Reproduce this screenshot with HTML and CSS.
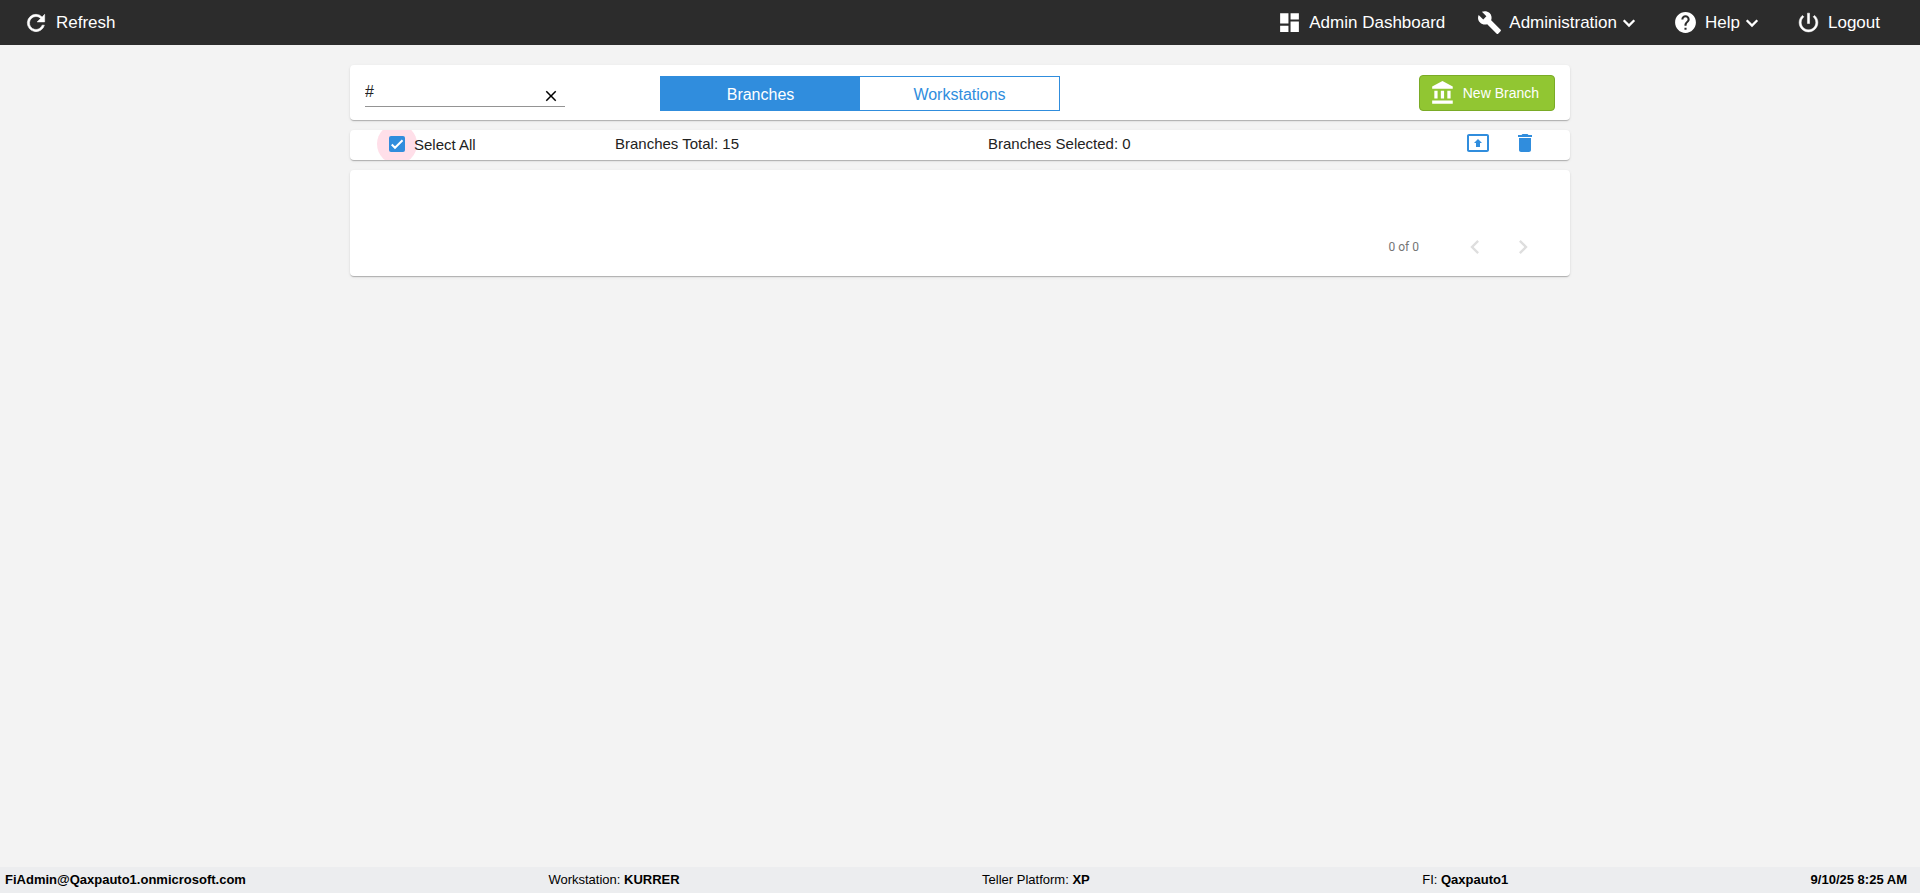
FILE: index.html
```html
<!DOCTYPE html>
<html lang="en">
<head>
<meta charset="utf-8">
<title>Branches</title>
<link rel="stylesheet" href="styles.css">
</head>
<body>
<header class="topbar">
  <button class="nav-item" type="button">
    <svg class="icon-refresh" viewBox="0 0 24 24"><path d="M17.65 6.35A7.96 7.96 0 0 0 12 4a8 8 0 1 0 7.73 10h-2.08A6 6 0 1 1 12 6c1.66 0 3.14.69 4.22 1.78L13 11h7V4l-2.35 2.35z"/></svg>
    Refresh
  </button>
  <nav class="nav">
    <a class="nav-item" href="#">
      <svg class="icon-nav" viewBox="0 0 24 24"><path d="M3 13h8V3H3v10zm0 8h8v-6H3v6zm10 0h8V11h-8v10zm0-18v6h8V3h-8z"/></svg>
      Admin Dashboard
    </a>
    <button class="nav-item" type="button">
      <svg class="icon-nav" viewBox="0 0 24 24"><path d="M22.7 19l-9.1-9.1c.9-2.3.4-5-1.5-6.900-2-2-5-2.400-7.400-1.300L9 6 6 9 1.600 4.700C.4 7.100.9 10.100 2.900 12.100c1.900 1.900 4.600 2.400 6.900 1.500l9.100 9.100c.4.4 1 .4 1.400 0l2.300-2.300c.5-.4.5-1.100.1-1.400z"/></svg>
      <span class="nav-label">Administration<svg class="icon-chevron" viewBox="0 0 24 24"><path d="M6.700 9.200l5.300 5.300 5.300-5.300"/></svg></span>
    </button>
    <button class="nav-item" type="button">
      <svg class="icon-nav" viewBox="0 0 24 24"><path d="M12 2C6.480 2 2 6.480 2 12s4.480 10 10 10 10-4.480 10-10S17.520 2 12 2zm1 17h-2v-2h2v2zm2.070-7.750l-.9.920C13.450 12.900 13 13.500 13 15h-2v-.5c0-1.100.45-2.100 1.170-2.830l1.240-1.260c.37-.36.59-.86.59-1.410 0-1.100-.9-2-2-2s-2 .9-2 2H8c0-2.210 1.790-4 4-4s4 1.790 4 4c0 .88-.36 1.680-.93 2.250z"/></svg>
      <span class="nav-label">Help<svg class="icon-chevron" viewBox="0 0 24 24"><path d="M6.700 9.200l5.300 5.300 5.300-5.300"/></svg></span>
    </button>
    <button class="nav-item" type="button">
      <svg class="icon-nav icon-bold" viewBox="0 0 24 24"><path d="M13 3h-2v10h2V3zm4.830 2.170l-1.420 1.420C17.990 7.860 19 9.810 19 12c0 3.870-3.130 7-7 7s-7-3.130-7-7c0-2.190 1.010-4.140 2.580-5.420L6.170 5.170C4.230 6.820 3 9.260 3 12c0 4.970 4.030 9 9 9s9-4.030 9-9c0-2.740-1.230-5.180-3.170-6.830z"/></svg>
      Logout
    </button>
  </nav>
</header>

<main class="content">
  <section class="card toolbar">
    <div class="search">
      <input class="search-input" type="text" value="#" aria-label="Search">
      <button class="search-clear" type="button" aria-label="Clear">
        <svg viewBox="0 0 24 24"><path d="M19 6.410L17.590 5 12 10.590 6.410 5 5 6.410 10.590 12 5 17.590 6.410 19 12 13.410 17.590 19 19 17.590 13.410 12z"/></svg>
      </button>
    </div>
    <div class="tabs">
      <button class="tab tab-active" type="button">Branches</button>
      <button class="tab" type="button">Workstations</button>
    </div>
    <button class="new-branch" type="button">
      <svg viewBox="0 0 24 24"><path d="M4 10v7h3v-7H4zm6 0v7h3v-7h-3zM2 22h19v-3H2v3zm14-12v7h3v-7h-3zm-4.500-9L2 6v2h19V6l-9.500-5z"/></svg>
      New Branch
    </button>
  </section>

  <section class="card summary">
    <div class="select-all">
      <span class="check-wrap"><input class="check" type="checkbox" id="select-all" checked><svg class="tick" viewBox="0 0 24 24"><path d="M4.100 12.700L9 17.600 20.300 6.300"/></svg></span>
      <label for="select-all">Select All</label>
    </div>
    <span>Branches Total: 15</span>
    <div class="summary-end">
      <span>Branches Selected: 0</span>
      <div class="actions">
        <button class="action" type="button" aria-label="Export"><svg viewBox="0 0 24 24"><path d="M21 3H3c-1.110 0-2 .89-2 2v14c0 1.110.89 2 2 2h18c1.110 0 2-.89 2-2V5c0-1.110-.89-2-2-2zm0 16.020H3V4.980h18v14.040zM10 12H8l4-4 4 4h-2v4h-4v-4z"/></svg></button>
        <button class="action" type="button" aria-label="Delete"><svg viewBox="0 0 24 24"><path d="M6 19c0 1.100.9 2 2 2h8c1.100 0 2-.9 2-2V7H6v12zM19 4h-3.500l-1-1h-5l-1 1H5v2h14V4z"/></svg></button>
      </div>
    </div>
  </section>

  <section class="card results">
    <div class="pager">
      <span class="pager-range">0 of 0</span>
      <button class="pager-button" type="button" disabled aria-label="Previous page"><svg viewBox="0 0 24 24"><path d="M15.410 7.410L14 6l-6 6 6 6 1.410-1.410L10.830 12z"/></svg></button>
      <button class="pager-button" type="button" disabled aria-label="Next page"><svg viewBox="0 0 24 24"><path d="M10 6L8.590 7.410 13.170 12l-4.580 4.590L10 18l6-6z"/></svg></button>
    </div>
  </section>
</main>

<footer class="statusbar">
  <b>FiAdmin@Qaxpauto1.onmicrosoft.com</b>
  <span>Workstation: <b>KURRER</b></span>
  <span class="platform">Teller Platform: <b>XP</b></span>
  <span>FI: <b>Qaxpauto1</b></span>
  <b>9/10/25 8:25 AM</b>
</footer>
</body>
</html>
```

FILE: styles.css
```css
* {
  box-sizing: border-box;
}

body {
  margin: 0;
  min-height: 100vh;
  display: flex;
  flex-direction: column;
  background: #f3f3f3;
  color: #222;
  font-family: "Liberation Sans", Arial, sans-serif;
  font-size: 15px;
}

button {
  margin: 0;
  padding: 0;
  border: 0;
  background: none;
  color: inherit;
  font: inherit;
  cursor: pointer;
}

svg {
  display: block;
  flex: none;
  fill: currentColor;
}

/* Top bar */
.topbar {
  display: flex;
  justify-content: space-between;
  align-items: center;
  height: 45px;
  padding: 0 40px 0 23px;
  background: #2c2c2c;
  color: #fff;
}

.nav {
  display: flex;
  gap: 32px;
}

.nav-item {
  display: flex;
  align-items: center;
  gap: 7px;
  color: #fff;
  font-size: 17px;
  text-decoration: none;
}

.nav-label {
  display: flex;
  align-items: center;
}

.icon-refresh {
  width: 26px;
  height: 26px;
  stroke: currentColor;
  stroke-width: .5;
}

.icon-nav {
  width: 25px;
  height: 25px;
}

.icon-bold {
  stroke: currentColor;
  stroke-width: .5;
}

.icon-chevron {
  width: 24px;
  height: 24px;
  fill: none;
  stroke: currentColor;
  stroke-width: 2.3;
}

/* Cards */
.content {
  flex: 1;
  display: flex;
  flex-direction: column;
  gap: 10px;
  width: 100%;
  max-width: 1220px;
  margin: 0 auto;
  padding: 20px 0;
}

.card {
  border-radius: 4px;
  background: #fff;
  box-shadow: 0 2px 1px -1px rgba(0, 0, 0, .14), 0 1px 1px rgba(0, 0, 0, .1), 0 1px 3px rgba(0, 0, 0, .1);
}

.toolbar {
  display: flex;
  align-items: center;
  padding: 10px 15px 9px;
}

.search {
  display: flex;
  align-items: center;
  width: 200px;
  height: 31px;
  margin-bottom: 4px;
  border-bottom: 1px solid #949494;
  padding-right: 5px;
}

.search-input {
  flex: 1;
  min-width: 0;
  height: 30px;
  padding: 3px 0 0;
  border: 0;
  outline: 0;
  background: none;
  color: #222;
  font: 16px/20px "Liberation Sans", Arial, sans-serif;
}

.search-clear {
  align-self: flex-end;
  padding-bottom: 1px;
  color: #000;
}

.search-clear svg {
  width: 18px;
  height: 18px;
}

.tabs {
  display: flex;
  width: 400px;
  height: 35px;
  margin-left: 95px;
  border: 1px solid #308ddd;
}

.tab {
  flex: 1;
  padding-top: 3px;
  color: #308ddd;
  font-size: 16px;
}

.tab-active {
  background: #308ddd;
  color: #fff;
}

.new-branch {
  display: flex;
  align-items: center;
  gap: 7px;
  height: 36px;
  margin-left: auto;
  padding: 0 15px 0 10px;
  border: 1px solid #7aab26;
  border-radius: 4px;
  background: #91c632;
  color: #fff;
  font-size: 14px;
}

.new-branch svg {
  width: 26px;
  height: 26px;
}

/* Summary row */
.summary {
  display: grid;
  grid-template-columns: 226fr 373fr 549fr;
  align-items: center;
  height: 30px;
  padding: 0 33px 3px 39px;
  overflow: hidden;
}

.select-all {
  display: flex;
  align-items: center;
  gap: 9px;
  padding-top: 1px;
}

.check-wrap {
  position: relative;
  width: 16px;
  height: 16px;
}

.check-wrap::before {
  content: "";
  position: absolute;
  inset: -12px;
  border-radius: 50%;
  background: #ffdfe9;
}

.check {
  position: relative;
  display: block;
  width: 16px;
  height: 16px;
  margin: 0;
  appearance: none;
  border-radius: 2px;
  background: #308ddd;
}

.tick {
  position: absolute;
  inset: 0;
  width: 16px;
  height: 16px;
  fill: none;
  stroke: #fff;
  stroke-width: 3;
  pointer-events: none;
}

.select-all label {
  position: relative;
  padding-top: 1px;
}

.summary-end {
  display: flex;
  align-items: center;
  justify-content: space-between;
}

.actions {
  display: flex;
  gap: 23px;
  padding-bottom: 1px;
  color: #308ddd;
}

.action svg {
  width: 24px;
  height: 24px;
}

/* Results */
.results {
  padding: 49px 23px 1px;
}

.pager {
  display: flex;
  align-items: center;
  justify-content: flex-end;
  height: 56px;
  color: #757575;
  font: 12px/20px Roboto, sans-serif;
}

.pager-range {
  margin-right: 32px;
}

.pager-button {
  display: grid;
  place-items: center;
  width: 48px;
  height: 40px;
  color: #dedede;
  cursor: default;
}

.pager-button svg {
  width: 28px;
  height: 28px;
}

/* Status bar */
.statusbar {
  display: flex;
  align-items: center;
  justify-content: space-between;
  height: 26px;
  padding: 0 13px 2px 5px;
  background: #ecedef;
  color: #000;
  font-size: 13px;
}

.platform {
  margin-right: 30px;
}
```
